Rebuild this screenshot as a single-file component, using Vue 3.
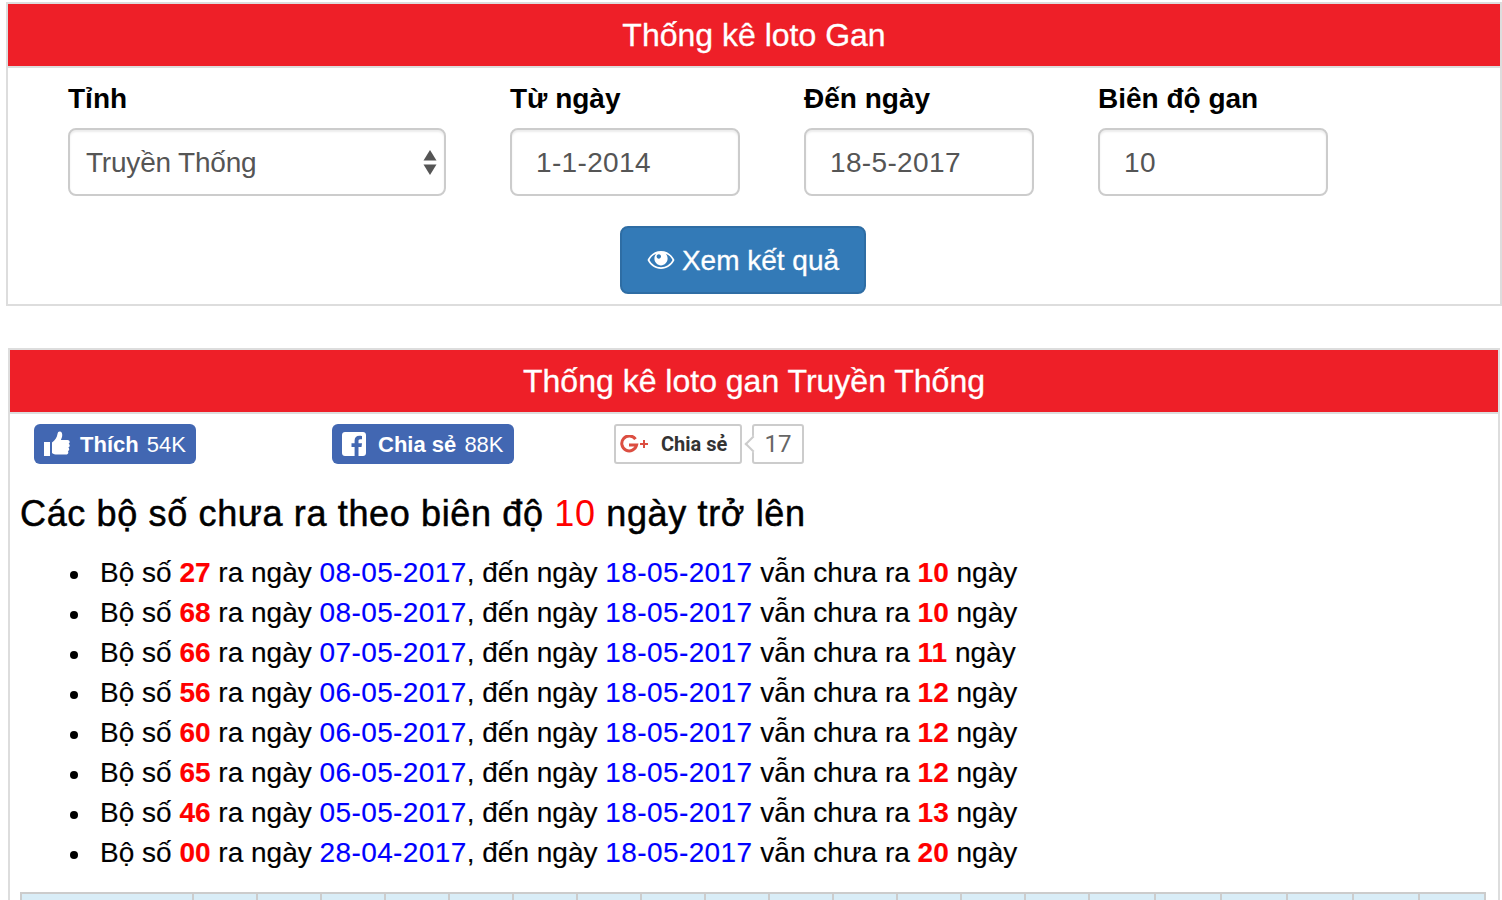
<template>
  <div class="page">
    <section class="box box-form">
      <h2 class="box-title">Thống kê loto Gan</h2>
      <form class="filter" @submit.prevent>
        <div class="fields">
          <div class="field field-select">
            <label>Tỉnh</label>
            <div class="select-wrap">
              <select class="control">
                <option>Truyền Thống</option>
              </select>
              <svg class="select-arrows" width="14" height="26" viewBox="0 0 14 26">
                <path d="M7 0L13.5 10.5H.5z" />
                <path d="M7 25L.5 14.500H13.500z" />
              </svg>
            </div>
          </div>
          <div v-for="f in filterFields" :key="f.label" class="field">
            <label>{{ f.label }}</label>
            <input class="control text-input" type="text" :value="f.value" />
          </div>
        </div>
        <div class="submit-row">
          <button class="btn-view" type="submit">
            <svg width="28" height="20" viewBox="0 0 28 20">
              <path fill-rule="evenodd" d="M14 1C8 1 3.200 4.500 .5 10c2.700 5.500 7.500 9 13.500 9s10.800-3.500 13.500-9C24.800 4.500 20 1 14 1zM9.300 3.700C6.400 4.800 4 6.900 2.500 10c2.200 4.200 6.400 7.200 11.500 7.200S23.300 14.200 25.500 10c-1.500-3.100-3.900-5.200-6.800-6.300 1.200 1.300 1.900 3 1.900 4.900 0 3.800-3 6.800-6.600 6.800s-6.600-3-6.600-6.800c0-1.900.7-3.600 1.900-4.900zM11.800 4.300c-1.200 0-2.200 1-2.200 2.200s1 2.200 2.200 2.200 2.200-1 2.200-2.200-1-2.200-2.200-2.200z" />
            </svg>
            <span class="btn-text">Xem kết quả</span>
          </button>
        </div>
      </form>
    </section>

    <section class="box box-result">
      <h2 class="box-title">Thống kê loto gan Truyền Thống</h2>
      <div class="result-body">
        <div class="social">
          <a class="fb-btn fb-like" href="#">
            <svg width="26" height="26" viewBox="0 0 26 26">
              <path d="M0 11h6v14H0zM8 11.500c3-2 5-5 5.500-8.500.2-1.700 1-2.500 2.200-2.500 2 0 2.800 2 2.500 4.300-.2 1.600-.8 3.200-1.300 4.200h6.600c1.300 0 2.200.9 2.200 2 0 .8-.4 1.400-1 1.800.7.400 1 1 1 1.800 0 .9-.5 1.600-1.300 1.900.5.400.8 1 .8 1.700 0 .9-.6 1.600-1.400 1.900.3.400.5.800.5 1.300 0 1.300-1 2.100-2.400 2.100H13c-2 0-3.500-.5-5-1.500z" />
            </svg>
            <span class="fb-label"><b>Thích</b> 54K</span>
          </a>
          <a class="fb-btn fb-share" href="#">
            <svg width="24" height="24" viewBox="0 0 24 24">
              <path fill-rule="evenodd" d="M3 0h18c1.700 0 3 1.300 3 3v18c0 1.700-1.300 3-3 3h-4.500v-9h3l.5-3.700h-3.500V9c0-1.100.4-1.800 1.900-1.800H20V3.900c-.4-.1-1.500-.2-2.700-.2-2.800 0-4.700 1.700-4.700 4.800v2.800H9.500V15h3.100v9H3c-1.700 0-3-1.300-3-3V3c0-1.700 1.300-3 3-3z" />
            </svg>
            <span class="fb-label"><b>Chia sẻ</b> 88K</span>
          </a>
          <a class="gplus" href="#">
            <span class="gplus-btn">
              <svg width="30" height="18" viewBox="0 0 30 18">
                <path d="M15.500 4.200A7.500 7.500 0 1 0 16.600 10H9" fill="none" stroke="#dc4e41" stroke-width="3" />
                <path d="M24 5v8M20 9h8" fill="none" stroke="#dc4e41" stroke-width="2" />
              </svg>
              <b>Chia sẻ</b>
            </span>
            <span class="gplus-count">17</span>
          </a>
        </div>

        <h3 class="summary">Các bộ số chưa ra theo biên độ <span class="red">10</span> ngày trở lên</h3>
        <ul class="gan-list">
          <li v-for="r in rows" :key="r.num">
            Bộ số <b class="red">{{ r.num }}</b> ra ngày <a href="#">{{ r.from }}</a>, đến ngày <a href="#">18-05-2017</a> vẫn chưa ra <b class="red">{{ r.days }}</b> ngày
          </li>
        </ul>

        <table class="gan-table">
          <tr>
            <th v-for="(w, i) in colWidths" :key="i" :style="{ width: w + 'px' }"></th>
          </tr>
        </table>
      </div>
    </section>
  </div>
</template>

<script setup>
const filterFields = [
  { label: 'Từ ngày', value: '1-1-2014' },
  { label: 'Đến ngày', value: '18-5-2017' },
  { label: 'Biên độ gan', value: '10' }
]

const rows = [
  { num: '27', from: '08-05-2017', days: 10 },
  { num: '68', from: '08-05-2017', days: 10 },
  { num: '66', from: '07-05-2017', days: 11 },
  { num: '56', from: '06-05-2017', days: 12 },
  { num: '60', from: '06-05-2017', days: 12 },
  { num: '65', from: '06-05-2017', days: 12 },
  { num: '46', from: '05-05-2017', days: 13 },
  { num: '00', from: '28-04-2017', days: 20 }
]

// first column, then the day columns as they come out in the table
const colWidths = [172, ...Array(14).fill(64), ...Array(5).fill(66), 68]
</script>

<style>
html,
body {
  margin: 0;
  overflow: hidden;
  background: #fff;
}
</style>

<style scoped>
.page {
  height: 900px;
  overflow: hidden;
  padding-top: 2px;
  box-sizing: border-box;
  font-family: "Liberation Sans", Arial, sans-serif;
  color: #000;
}

.box {
  border: 2px solid #ddd;
  box-sizing: border-box;
}

.box-form {
  margin-left: 6px;
  width: 1496px;
}

.box-result {
  margin: 42px 0 0 8px;
  width: 1492px;
}

.box-title {
  margin: 0;
  height: 62px;
  line-height: 62px;
  background: #ee1f28;
  border-bottom: 2px solid #ddd;
  box-sizing: content-box;
  color: #fff;
  font-size: 32px;
  font-weight: 400;
  text-align: center;
  -webkit-text-stroke: 0.3px #fff;
}

.filter {
  padding: 12px 0 10px;
}

.fields {
  display: flex;
  gap: 64px;
  padding-left: 60px;
}

.field {
  width: 230px;
}

.field-select {
  width: 378px;
}

.field label {
  display: block;
  height: 48px;
  line-height: 38px;
  font-size: 28px;
  font-weight: 700;
}

.control {
  display: block;
  width: 100%;
  height: 68px;
  box-sizing: border-box;
  border: 2px solid #ccc;
  border-radius: 8px;
  background: #fff;
  color: #555;
  font-family: inherit;
  font-size: 28px;
  box-shadow: inset 0 2px 2px rgba(0, 0, 0, 0.075);
  outline: none;
}

select.control {
  appearance: none;
  padding: 0 40px 0 16px;
  letter-spacing: -0.2px;
}

.text-input {
  padding: 2px 24px 0;
  letter-spacing: 0.35px;
}

.select-wrap {
  position: relative;
}

.select-arrows {
  position: absolute;
  top: 22px;
  right: 9px;
  fill: #555;
}

.submit-row {
  display: flex;
  justify-content: center;
  padding: 30px 22px 0 0;
}

.btn-view {
  display: flex;
  align-items: center;
  justify-content: center;
  gap: 7px;
  width: 246px;
  height: 68px;
  box-sizing: border-box;
  border: 2px solid #2e6da4;
  border-radius: 8px;
  background: #337ab7;
  color: #fff;
  font-family: inherit;
  font-size: 28px;
}

.btn-view svg {
  fill: #fff;
}

.btn-text {
  padding-top: 2px;
  -webkit-text-stroke: 0.3px #fff;
}

.result-body {
  padding: 10px 12px 0 10px;
}

.social {
  display: flex;
  height: 40px;
  padding-left: 14px;
}

.fb-btn {
  display: flex;
  align-items: center;
  height: 40px;
  box-sizing: border-box;
  border-radius: 6px;
  background: #4267b2;
  color: #fff;
  font-size: 22px;
  text-decoration: none;
}

.fb-btn svg {
  fill: #fff;
  flex: none;
}

.fb-label {
  padding-top: 1px;
  white-space: pre;
}

.fb-label b {
  margin-right: 2px;
}

.fb-like {
  width: 162px;
  padding-left: 10px;
  gap: 10px;
}

.fb-share {
  width: 182px;
  margin-left: 136px;
  padding-left: 10px;
  gap: 12px;
}

.gplus {
  display: flex;
  margin-left: 100px;
  color: #333;
  text-decoration: none;
  font-family: Roboto, "Liberation Sans", sans-serif;
  font-size: 20px;
}

.gplus-btn,
.gplus-count {
  display: flex;
  align-items: center;
  height: 40px;
  box-sizing: border-box;
  border: 2px solid #ccc;
  border-radius: 3px;
}

.gplus-btn {
  width: 128px;
  padding-left: 4px;
  gap: 11px;
}

.gplus-count {
  position: relative;
  width: 52px;
  margin-left: 10px;
  justify-content: center;
  color: #666;
  font-size: 24px;
}

.gplus-count::before {
  content: "";
  position: absolute;
  left: -7px;
  top: 12px;
  width: 10px;
  height: 10px;
  background: #fff;
  border-left: 2px solid #ccc;
  border-bottom: 2px solid #ccc;
  transform: rotate(45deg);
}

.summary {
  margin: 30px 0 0;
  height: 40px;
  line-height: 40px;
  font-size: 36px;
  font-weight: 400;
  letter-spacing: 0.64px;
  -webkit-text-stroke: 0.5px #000;
}

.summary .red {
  -webkit-text-stroke: 0;
}

.red {
  color: #f00;
}

.gan-list {
  list-style: none;
  margin: 19px 0;
  padding: 0 0 0 80px;
  font-size: 28px;
  line-height: 40px;
  -webkit-text-stroke: 0.15px;
}

.gan-list li {
  position: relative;
}

.gan-list li::before {
  content: "";
  position: absolute;
  left: -30px;
  top: 18px;
  width: 8px;
  height: 8px;
  border-radius: 50%;
  background: #000;
}

.gan-list a {
  color: #00f;
  text-decoration: none;
  letter-spacing: 0.4px;
}

.gan-table {
  width: 1466px;
  border-collapse: separate;
  border-spacing: 0;
  table-layout: fixed;
}

.gan-table th {
  height: 60px;
  box-sizing: border-box;
  border-top: 2px solid #ccc;
  border-left: 2px solid #ccc;
  background: #d9edf7;
  padding: 0;
}

.gan-table th:last-child {
  border-right: 2px solid #ccc;
}
</style>
